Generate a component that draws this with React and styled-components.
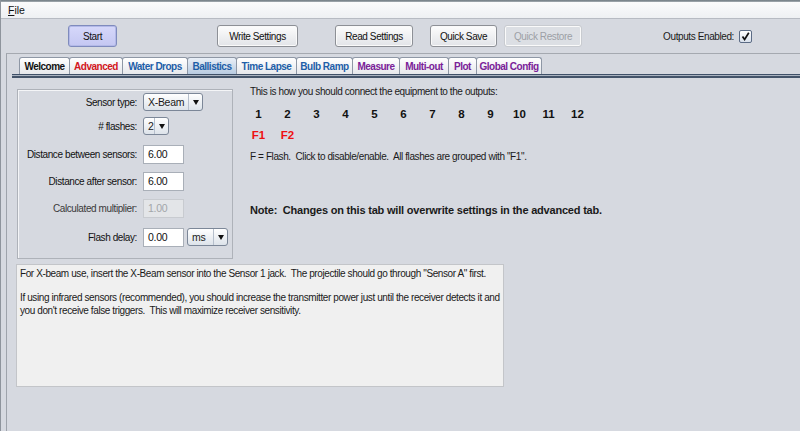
import React from "react";
import styled, { createGlobalStyle } from "styled-components";

const GlobalStyle = createGlobalStyle`
  html, body { margin: 0; padding: 0; }
  body {
    background: #d6d9e0;
    font-family: "Liberation Sans", Arial, sans-serif;
    font-size: 10px;
    color: #1a1a1a;
  }
`;

const Window = styled.div`
  width: 800px;
  height: 431px;
  overflow: hidden;
  display: flex;
  flex-direction: column;
  background: #d6d9e0;
  border-left: 1px solid #8e949c;
  box-sizing: border-box;
`;

const TopStrip = styled.div`
  height: 2px;
  background: linear-gradient(#6d7880, #a6adb3);
`;

const MenuBar = styled.div`
  height: 16px;
  display: flex;
  align-items: center;
  padding-left: 7px;
  background: linear-gradient(#fbfbfc, #eef0f3);
  border-bottom: 1px solid #b7bbc3;
`;

const MenuItem = styled.span`
  font-size: 10.5px;
  color: #111;
  & u { text-decoration: underline; text-underline-offset: 1px; }
`;

const Toolbar = styled.div`
  height: 34px;
  display: flex;
  align-items: center;
  padding-left: 67px;
  padding-right: 48px;
`;

const Button = styled.div`
  height: 22px;
  width: ${(p) => p.$w}px;
  margin-left: ${(p) => p.$ml || 0}px;
  box-sizing: border-box;
  display: flex;
  align-items: center;
  justify-content: center;
  white-space: nowrap;
  border-radius: 3px;
  font-size: 10px;
  letter-spacing: -0.4px;
  border: 1px solid ${(p) => (p.$primary ? "#7f8bbd" : p.$disabled ? "#c8cbd0" : "#8d9096")};
  color: ${(p) => (p.$disabled ? "#9c9fa6" : "#111")};
  background: ${(p) =>
    p.$primary
      ? "linear-gradient(#d6d8fa, #c4c7f2)"
      : p.$disabled
      ? "#dcdfe4"
      : "linear-gradient(#fdfdfd, #e2e4e8)"};
  box-shadow: ${(p) => (p.$primary ? "inset 0 0 0 1px #b3b9e8" : "inset 0 0 0 1px #fafafa")};
`;

const Spacer = styled.div`
  flex: 1;
`;

const OutputsLabel = styled.span`
  font-size: 10px;
  letter-spacing: -0.4px;
  margin-right: 5px;
`;

const CheckBox = styled.div`
  width: 11px;
  height: 11px;
  border: 1px solid #5b6b85;
  border-radius: 2px;
  background: linear-gradient(#ffffff, #d9e1ec);
  display: flex;
  align-items: center;
  justify-content: center;
`;

const TabbedPane = styled.div`
  flex: 1;
  margin-left: 5px;
  border-top: 1px solid #a5a9b0;
  border-left: 1px solid #9ea3ab;
  display: flex;
  flex-direction: column;
`;

const TabRow = styled.div`
  margin-top: 3px;
  display: flex;
  align-items: flex-end;
  padding-left: 12px;
  height: 17px;
`;

const Tab = styled.div`
  height: 17px;
  box-sizing: border-box;
  width: ${(p) => p.$w}px;
  display: flex;
  align-items: center;
  justify-content: center;
  white-space: nowrap;
  font-weight: bold;
  font-size: 10px;
  letter-spacing: -0.5px;
  color: ${(p) => p.$color};
  border: 1px solid #8e97a5;
  border-bottom: none;
  margin-right: -1px;
  border-radius: 3px 3px 0 0;
  background: ${(p) =>
    p.$selected ? "linear-gradient(#e9eff7, #b8cbe1)" : "linear-gradient(#ffffff, #e6e8ec)"};
`;

const TabLine = styled.div`
  margin-left: 5px;
  height: 4px;
  box-sizing: border-box;
  border-top: 1px solid #3f5068;
  border-bottom: 2px solid #44546a;
  background: #aab3c0;
`;

const Content = styled.div`
  padding: 11px 0 0 10px;
  display: flex;
  flex-direction: column;
`;

const TopArea = styled.div`
  display: flex;
`;

const FormPanel = styled.div`
  width: 216px;
  height: 170px;
  box-sizing: border-box;
  border: 1px solid #aeb2b9;
  box-shadow: inset 1px 1px 0 #f4f5f7;
  padding-top: 3px;
  display: flex;
  flex-direction: column;
`;

const FormRow = styled.div`
  display: flex;
  align-items: center;
  height: 18px;
  margin-top: ${(p) => p.$mt}px;
`;

const Label = styled.div`
  width: 119px;
  text-align: right;
  padding-right: 6px;
  white-space: nowrap;
  font-size: 10px;
  letter-spacing: -0.4px;
  color: ${(p) => (p.$disabled ? "#3a3a3a" : "#111")};
`;

const Combo = styled.div`
  width: ${(p) => p.$w}px;
  height: 18px;
  box-sizing: border-box;
  border: 1px solid #7c8798;
  border-radius: 3px;
  background: linear-gradient(#ffffff, #dde3ea);
  display: flex;
  align-items: center;
  margin-left: ${(p) => p.$ml || 0}px;
`;

const ComboText = styled.span`
  flex: 1;
  padding-left: 4px;
  font-size: 10.5px;
  letter-spacing: -0.3px;
`;

const ComboArrow = styled.div`
  width: 14px;
  height: 100%;
  box-sizing: border-box;
  border-left: 1px solid #b6bfcc;
  display: flex;
  align-items: center;
  justify-content: center;
  &::after {
    content: "";
    border-left: 3px solid transparent;
    border-right: 3px solid transparent;
    border-top: 5px solid #111;
  }
`;

const TextField = styled.div`
  width: 41px;
  height: 19px;
  box-sizing: border-box;
  border: 1px solid ${(p) => (p.$disabled ? "#c8cbd0" : "#a9afb8")};
  background: ${(p) => (p.$disabled ? "#e3e5e8" : "#ffffff")};
  color: ${(p) => (p.$disabled ? "#a2a5aa" : "#111")};
  padding-left: 4px;
  display: flex;
  align-items: center;
  font-size: 10.5px;
  letter-spacing: -0.3px;
`;

const InfoPanel = styled.div`
  margin-left: 17px;
  margin-top: -4px;
  display: flex;
  flex-direction: column;
`;

const InfoText = styled.div`
  font-size: 10px;
  letter-spacing: -0.4px;
  height: 14px;
  line-height: 14px;
  white-space: nowrap;
  margin-top: ${(p) => p.$mt || 0}px;
`;

const OutputGrid = styled.div`
  display: grid;
  grid-template-columns: repeat(12, 29px);
  margin-left: -6px;
  margin-top: ${(p) => p.$mt}px;
`;

const OutputCell = styled.div`
  text-align: center;
  font-weight: bold;
  font-size: 11.5px;
  height: 14px;
  line-height: 14px;
  color: ${(p) => p.$color || "#111"};
`;

const NoteText = styled.div`
  margin-top: 40px;
  font-weight: bold;
  font-size: 11px;
  letter-spacing: -0.2px;
  white-space: nowrap;
`;

const Description = styled.div`
  margin-top: 5px;
  margin-left: -1px;
  width: 488px;
  height: 123px;
  box-sizing: border-box;
  background: #f0f0f0;
  border: 1px solid #c3c5c9;
  padding: 2px 3px;
  font-size: 10px;
  letter-spacing: -0.4px;
  line-height: 13px;
  & p { margin: 0 0 11px 0; }
`;

const tabs = [
  { label: "Welcome", w: 51, color: "#111" },
  { label: "Advanced", w: 54, color: "#d3161c" },
  { label: "Water Drops", w: 66, color: "#1d5ea8" },
  { label: "Ballistics", w: 50, color: "#1d5ea8", selected: true },
  { label: "Time Lapse", w: 61, color: "#1d5ea8" },
  { label: "Bulb Ramp", w: 57, color: "#1d5ea8" },
  { label: "Measure", w: 48, color: "#7a2198" },
  { label: "Multi-out", w: 50, color: "#7a2198" },
  { label: "Plot", w: 29, color: "#7a2198" },
  { label: "Global Config", w: 66, color: "#7a2198" },
];

export default function App() {
  return (
    <>
      <GlobalStyle />
      <Window>
        <TopStrip />
        <MenuBar>
          <MenuItem>
            <u>F</u>ile
          </MenuItem>
        </MenuBar>
        <Toolbar>
          <Button $w={49} $primary>Start</Button>
          <Button $w={81} $ml={100}>Write Settings</Button>
          <Button $w={78} $ml={37}>Read Settings</Button>
          <Button $w={67} $ml={17}>Quick Save</Button>
          <Button $w={78} $ml={7} $disabled>Quick Restore</Button>
          <Spacer />
          <OutputsLabel>Outputs Enabled:</OutputsLabel>
          <CheckBox>
            <svg width="9" height="9" viewBox="0 0 9 9">
              <path d="M1.5 4.5 L3.6 7.5 L7.8 0.8" fill="none" stroke="#111" strokeWidth="1.7" />
            </svg>
          </CheckBox>
        </Toolbar>
        <TabbedPane>
          <TabRow>
            {tabs.map((t) => (
              <Tab key={t.label} $w={t.w} $color={t.color} $selected={t.selected}>
                {t.label}
              </Tab>
            ))}
          </TabRow>
          <TabLine />
          <Content>
            <TopArea>
              <FormPanel>
                <FormRow $mt={0}>
                  <Label>Sensor type:</Label>
                  <Combo $w={60}>
                    <ComboText>X-Beam</ComboText>
                    <ComboArrow />
                  </Combo>
                </FormRow>
                <FormRow $mt={6}>
                  <Label># flashes:</Label>
                  <Combo $w={26}>
                    <ComboText>2</ComboText>
                    <ComboArrow />
                  </Combo>
                </FormRow>
                <FormRow $mt={10}>
                  <Label>Distance between sensors:</Label>
                  <TextField>6.00</TextField>
                </FormRow>
                <FormRow $mt={9}>
                  <Label>Distance after sensor:</Label>
                  <TextField>6.00</TextField>
                </FormRow>
                <FormRow $mt={9}>
                  <Label $disabled>Calculated multiplier:</Label>
                  <TextField $disabled>1.00</TextField>
                </FormRow>
                <FormRow $mt={11}>
                  <Label>Flash delay:</Label>
                  <TextField>0.00</TextField>
                  <Combo $w={41} $ml={3}>
                    <ComboText>ms</ComboText>
                    <ComboArrow />
                  </Combo>
                </FormRow>
              </FormPanel>
              <InfoPanel>
                <InfoText>This is how you should connect the equipment to the outputs:</InfoText>
                <OutputGrid $mt={8}>
                  {Array.from({ length: 12 }, (_, i) => (
                    <OutputCell key={i}>{i + 1}</OutputCell>
                  ))}
                </OutputGrid>
                <OutputGrid $mt={7}>
                  <OutputCell $color="#ee1111">F1</OutputCell>
                  <OutputCell $color="#ee1111">F2</OutputCell>
                </OutputGrid>
                <InfoText $mt={8}>
                  F = Flash.&nbsp; Click to disable/enable.&nbsp; All flashes are grouped with "F1".
                </InfoText>
                <NoteText>Note:&nbsp; Changes on this tab will overwrite settings in the advanced tab.</NoteText>
              </InfoPanel>
            </TopArea>
            <Description>
              <p>
                For X-beam use, insert the X-Beam sensor into the Sensor 1 jack.&nbsp; The projectile should go
                through "Sensor A" first.
              </p>
              <p>
                If using infrared sensors (recommended), you should increase the transmitter power just until the
                receiver detects it and you don't receive false triggers.&nbsp; This will maximize receiver
                sensitivity.
              </p>
            </Description>
          </Content>
        </TabbedPane>
      </Window>
    </>
  );
}
